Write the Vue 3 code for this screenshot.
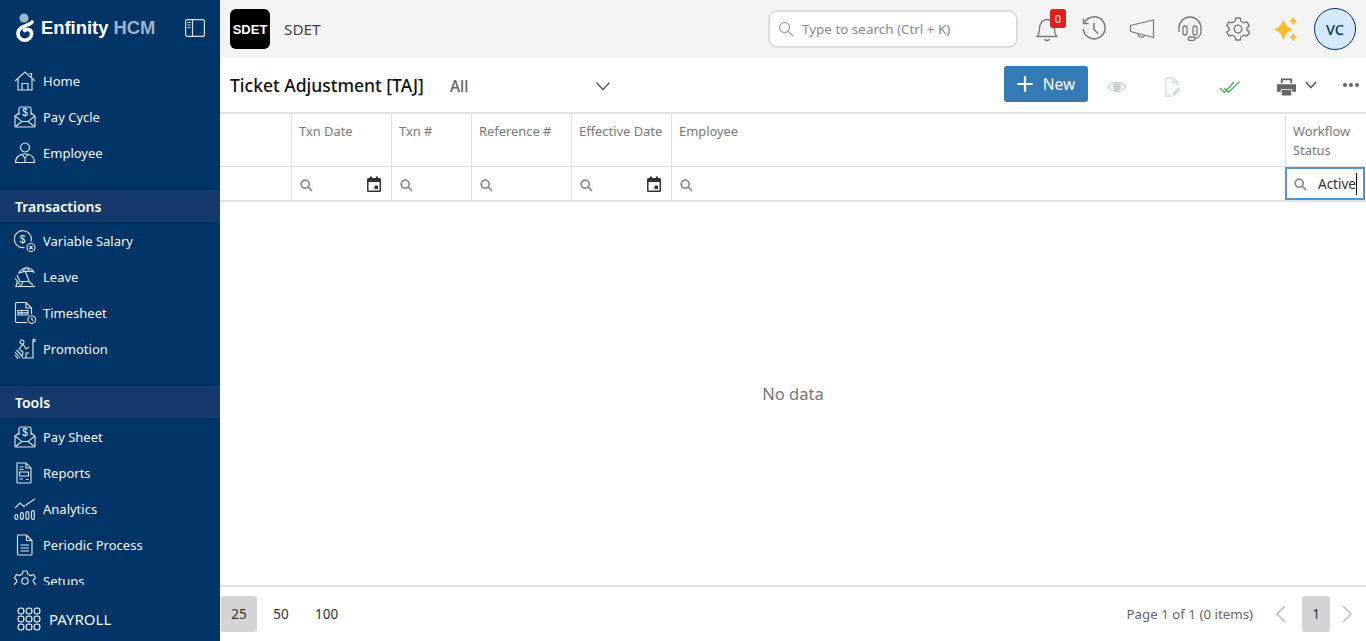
<template>
  <div class="app">
    <!-- sidebar -->
    <aside class="side">
      <div class="brand">
        <svg class="brand-mark" width="20" height="30" viewBox="0 0 20 30">
          <circle cx="9" cy="5" r="4.600" fill="#9db4cd" />
          <path d="M17 9C14.500 13 3 12.500 3 20.500a6.800 6.800 0 1 0 13.600 0C16.600 16.500 12 15.500 9.500 17.500" fill="none" stroke="#fff" stroke-width="3.600" stroke-linecap="round" />
        </svg>
        <span class="brand-name">Enfinity <b>HCM</b></span>
        <svg class="collapse" width="20" height="18" viewBox="0 0 20 18" fill="none" stroke="#d5e0ec" stroke-width="1.200">
          <rect x=".6" y=".6" width="18.800" height="16.800" rx="2" />
          <path d="M7.500 .6V17.400M2.500 3.500H5.500M2.500 6H5.500M2.500 8.500H5.500" />
        </svg>
      </div>
      <nav class="nav">
        <template v-for="group in groups" :key="group.title">
          <div v-if="group.title" class="nav-head">{{ group.title }}</div>
          <ul class="nav-list">
            <li v-for="item in group.items" :key="item.label" class="nav-item">
              <svg width="22" height="22" viewBox="0 0 22 22" fill="none" stroke="#dbe5f0" stroke-width="1.150">
                <path v-for="d in icons[item.icon]" :key="d" :d="d" />
                <text v-if="item.dollar" :x="item.dollar[0]" :y="item.dollar[1]" class="dollar">$</text>
              </svg>
              <span>{{ item.label }}</span>
            </li>
          </ul>
        </template>
      </nav>
      <div class="side-foot">
        <svg width="24" height="24" viewBox="0 0 24 24" fill="none" stroke="#dbe5f0" stroke-width="1.300">
          <template v-for="y in [4, 12, 20]" :key="y">
            <rect v-for="x in [4, 12, 20]" :key="x" :x="x - 2.800" :y="y - 2.800" width="5.600" height="5.600" rx="2" />
          </template>
        </svg>
        <span>PAYROLL</span>
      </div>
    </aside>

    <div class="main">
      <!-- top bar -->
      <header class="top">
        <div class="org-logo">SDET</div>
        <div class="org-name">SDET</div>
        <div class="search">
          <svg width="16" height="16" viewBox="0 0 16 16" fill="none" stroke="#999" stroke-width="1.100">
            <circle cx="6.500" cy="6.500" r="5" /><path d="M10.300 10.300L15 15" />
          </svg>
          <span>Type to search (Ctrl + K)</span>
        </div>
        <div class="top-icons">
          <div class="bell">
            <svg width="26" height="28" viewBox="0 0 26 28" fill="none" stroke="#777" stroke-width="1.300">
              <path d="M2 21.500C4.500 19 4.500 17 4.500 13.500C4.500 8.500 7.500 4.500 12 4.500C16.500 4.500 19.500 8.500 19.500 13.500C19.500 17 19.500 19 22 21.500Z" stroke-linejoin="round" />
              <path d="M9.500 24C10 26 14 26 14.500 24" />
            </svg>
            <span class="badge">0</span>
          </div>
          <svg width="26" height="26" viewBox="0 0 26 26" fill="none" stroke="#777" stroke-width="1.500">
            <path d="M3.500 6.500A11 11 0 1 1 2.200 13" /><path d="M2.500 2.500V7.500H7.500" /><path d="M13 7V13.500L17 17.500" />
          </svg>
          <svg width="26" height="22" viewBox="0 0 26 22" fill="none" stroke="#777" stroke-width="1.200">
            <path d="M1.500 7.500L24.500 2V19.500L1.500 13.500ZM9 15.500C9 20 15.500 20 15.500 17" stroke-linejoin="round" />
          </svg>
          <svg width="26" height="28" viewBox="0 0 26 28" fill="none" stroke="#777" stroke-width="1.300">
            <path d="M2 17V13A11 11 0 0 1 24 13V17C24 20 21.500 23 18 23.500" />
            <rect x="6" y="11" width="4" height="9" rx="2" /><rect x="16" y="11" width="4" height="9" rx="2" />
            <rect x="11" y="22" width="7" height="3.400" rx="1.700" />
          </svg>
          <svg width="26" height="26" viewBox="0 0 26 26" fill="none" stroke="#777" stroke-width="1.300">
            <circle cx="13" cy="13" r="3.800" />
            <path d="M10.800 2H15.200L16 5.200L18.800 6.800L22 5.900L24.200 9.700L21.800 12V14L24.200 16.300L22 20.100L18.800 19.200L16 20.800L15.200 24H10.800L10 20.800L7.200 19.200L4 20.100L1.800 16.300L4.200 14V12L1.800 9.700L4 5.900L7.200 6.800L10 5.200Z" stroke-linejoin="round" />
          </svg>
          <svg width="26" height="26" viewBox="0 0 26 26" fill="#fbbc2c">
            <path d="M10.500 3Q12.500 11.500 20 13.500Q12.500 15.500 10.500 24Q8.500 15.500 1 13.500Q8.500 11.500 10.500 3Z" />
            <path d="M20.300 .5Q21.200 4.100 25 5Q21.200 5.900 20.300 9.500Q19.400 5.900 15.600 5Q19.400 4.100 20.300 .5Z" />
            <path d="M20.300 16.500Q21.200 20.100 25 21Q21.200 21.900 20.300 25.500Q19.400 21.900 15.600 21Q19.400 20.100 20.300 16.500Z" />
          </svg>
          <div class="avatar">VC</div>
        </div>
      </header>

      <!-- toolbar -->
      <div class="bar">
        <h1 class="title">Ticket Adjustment [TAJ]</h1>
        <div class="filter">
          <span>All</span>
          <svg width="16" height="10" viewBox="0 0 16 10" fill="none" stroke="#555" stroke-width="1.200"><path d="M1.500 1.500L8 8.500L14.500 1.500" /></svg>
        </div>
        <button class="new-btn">
          <svg width="16" height="16" viewBox="0 0 16 16" stroke="#fff" stroke-width="2.200"><path d="M8 0V16M0 8H16" /></svg>
          New
        </button>
        <div class="bar-icons">
          <svg class="ic-eye" width="20" height="14" viewBox="0 0 20 14" fill="none" stroke="#ccd0d6" stroke-width="1.300">
            <path d="M1 7C5 1 15 1 19 7C15 13 5 13 1 7Z" /><circle cx="10" cy="7" r="3.400" fill="#ccd0d6" />
          </svg>
          <svg class="ic-note" width="18" height="20" viewBox="0 0 18 20" fill="none" stroke="#d6d9dd" stroke-width="1.300">
            <path d="M8 19H2V1H9.500L14 5.500V9M9.500 1V5.500H14" /><path d="M9 18L15.500 11.500" stroke-width="3.200" />
          </svg>
          <svg class="ic-check" width="22" height="14" viewBox="0 0 22 14" fill="none" stroke="#3fa648" stroke-width="1.200">
            <path d="M1 8L5.500 12.500L15 2M5.500 8L9.500 12.500L20.500 1.500" />
          </svg>
          <svg class="ic-print" width="19" height="18" viewBox="0 0 20 18" fill="#666">
            <path d="M4 0H16V5H14V2H6V5H4ZM0 6H20V14H16V11H4V14H0ZM5 12H15V18H5Z" />
          </svg>
          <svg class="ic-drop" width="12" height="8" viewBox="0 0 12 8" fill="none" stroke="#666" stroke-width="1.800"><path d="M1 1L6 6.500L11 1" /></svg>
          <span class="dots"><i></i><i></i><i></i></span>
        </div>
      </div>

      <!-- grid -->
      <div class="grid">
        <div class="grid-row head">
          <div v-for="col in columns" :key="col.key" class="cell">{{ col.title }}</div>
        </div>
        <div class="grid-row filters">
          <div v-for="col in columns" :key="col.key" class="cell" :class="{ focused: col.value }">
            <template v-if="col.key !== 'sel'">
              <svg class="lens" width="13" height="13" viewBox="0 0 13 13" fill="none" stroke="#8a8a8a" stroke-width="1.700">
                <circle cx="5.200" cy="5.200" r="4" /><path d="M8.200 8.200L12 12" />
              </svg>
              <span v-if="col.value" class="typed">{{ col.value }}</span>
              <svg v-if="col.date" class="cal" width="14" height="16" viewBox="0 0 14 16">
                <path d="M1.500 2H12.500A1.500 1.500 0 0 1 14 3.500V14.500A1.500 1.500 0 0 1 12.500 16H1.500A1.500 1.500 0 0 1 0 14.500V3.500A1.500 1.500 0 0 1 1.500 2ZM1.500 6V14.500H12.500V6Z" fill="#333" fill-rule="evenodd" />
                <path d="M3 .5H5V3H3ZM9 .5H11V3H9ZM7.500 9.500H11V13H7.500Z" fill="#333" />
              </svg>
            </template>
          </div>
        </div>
        <div class="empty">No data</div>
      </div>

      <!-- pager -->
      <footer class="pager">
        <button v-for="size in pageSizes" :key="size" class="page-btn" :class="{ on: size === 25 }">{{ size }}</button>
        <span class="info">Page 1 of 1 (0 items)</span>
        <svg class="arrow" width="11" height="18" viewBox="0 0 11 18" fill="none" stroke="#bbb" stroke-width="1.500"><path d="M10 1L2 9L10 17" /></svg>
        <button class="page-btn on num">1</button>
        <svg class="arrow" width="11" height="18" viewBox="0 0 11 18" fill="none" stroke="#bbb" stroke-width="1.500"><path d="M1 1L9 9L1 17" /></svg>
      </footer>
    </div>
  </div>
</template>

<script setup>
const icons = {
  home: ['M1 11L11 2L21 11', 'M4 9V20H18V9', 'M8 20V13.500H14V20', 'M15.500 3.500H17.500V6.500'],
  mail: ['M5 9V2.500A1.500 1.500 0 0 1 6.500 1H15.500A1.500 1.500 0 0 1 17 2.500V9', 'M5 7L1 10V20A1 1 0 0 0 2 21H20A1 1 0 0 0 21 20V10L17 7', 'M1 10L8 15.500H14L21 10', 'M1.500 20.500L8 15.500M20.500 20.500L14 15.500'],
  person: ['M11 1a4.500 4.500 0 1 0 .01 0Z', 'M1.500 20.500C1.500 15 5.500 12 11 12C16.500 12 20.500 15 20.500 20.500Z', 'M8 12.500L11 16L14 12.500M11 16V20.500'],
  salary: ['M17 11.500A8.500 8.500 0 1 0 10.500 17.500', 'M13 17.500a4 4 0 1 0 8 0a4 4 0 1 0 -8 0Z', 'M15.500 16L18.500 19M15.500 19L18.500 16'],
  leave: ['M5 7C8 1 16 0 20 6C15 4.500 10 5 5 7Z', 'M11 4.500L15 15', 'M3 9L6 15.500H15L19 19', 'M1 20.500H21', 'M3.500 15.500L2 20M9 15.500L7 20', 'M9 5L11.500 1.500M15 5L13 1', 'M1 12L6 19'],
  timesheet: ['M13 20.500H3A1.500 1.500 0 0 1 1.500 19V2A1.500 1.500 0 0 1 3 .5H12L17.500 6V12', 'M12 .5V6H17.500', 'M4 8.500H14V13H4Z', 'M4 10.800H14M7.500 8.500V13', 'M14 17.500a3.800 3.800 0 1 0 7.600 0a3.800 3.800 0 1 0 -7.600 0Z', 'M17.800 15.500V17.500L19.300 18.500'],
  promo: ['M19 6V20H8', 'M19 1V6M19 1L22 2.500L19 4', 'M8 2a2 2 0 1 0 .01 0Z', 'M9 6L5 11L9 14L8 19M9 6L12 11L15 9', 'M1 14L6 20M2.500 12L8 18M1 17L4 21', 'M12 20V15H15'],
  report: ['M3 1H12L17 6V20A1 1 0 0 1 16 21H4A1 1 0 0 1 3 20Z', 'M12 1V6H17', 'M5.500 5H9.500M5.500 7.500H9.500', 'M5.500 10H14.500V14H5.500Z', 'M5.500 17H9M12 17.500H14.500'],
  chart: ['M1 10L6 5L10 8.500L14 5.500L21 1', 'M1 20V18a1.400 1.400 0 0 1 2.800 0V20a1.400 1.400 0 0 1 -2.800 0Z', 'M6.500 20V16a1.400 1.400 0 0 1 2.800 0V20a1.400 1.400 0 0 1 -2.800 0Z', 'M12 20V15a1.400 1.400 0 0 1 2.800 0V20a1.400 1.400 0 0 1 -2.800 0Z', 'M17.500 20V14a1.400 1.400 0 0 1 2.800 0V20a1.400 1.400 0 0 1 -2.800 0Z'],
  doc: ['M3.500 1H12.500L18 6.500V20A1 1 0 0 1 17 21H4.500A1 1 0 0 1 3.500 20Z', 'M12.500 1V6.500H18', 'M6.500 11H15M6.500 14H15M6.500 17H15'],
  gear: ['M9 1H13L13.800 4L16.500 5.500L19.500 4.500L21.500 8L19.300 10V12L21.500 14L19.500 17.500L16.500 16.500L13.800 18L13 21H9L8.200 18L5.500 16.500L2.500 17.500L.5 14L2.700 12V10L.5 8L2.500 4.500L5.500 5.500L8.200 4Z', 'M7.800 11a3.200 3.200 0 1 0 6.400 0a3.200 3.200 0 1 0 -6.400 0Z'],
}

const groups = [
  {
    title: '',
    items: [
      { label: 'Home', icon: 'home' },
      { label: 'Pay Cycle', icon: 'mail', dollar: [11, 9.500] },
      { label: 'Employee', icon: 'person' },
    ],
  },
  {
    title: 'Transactions',
    items: [
      { label: 'Variable Salary', icon: 'salary', dollar: [8.500, 13] },
      { label: 'Leave', icon: 'leave' },
      { label: 'Timesheet', icon: 'timesheet' },
      { label: 'Promotion', icon: 'promo' },
    ],
  },
  {
    title: 'Tools',
    items: [
      { label: 'Pay Sheet', icon: 'mail', dollar: [11, 9.500] },
      { label: 'Reports', icon: 'report' },
      { label: 'Analytics', icon: 'chart' },
      { label: 'Periodic Process', icon: 'doc' },
      { label: 'Setups', icon: 'gear' },
    ],
  },
]

const columns = [
  { key: 'sel', title: '' },
  { key: 'date', title: 'Txn Date', date: true },
  { key: 'no', title: 'Txn #' },
  { key: 'ref', title: 'Reference #' },
  { key: 'eff', title: 'Effective Date', date: true },
  { key: 'emp', title: 'Employee' },
  { key: 'status', title: 'Workflow Status', value: 'Active' },
]

const pageSizes = [25, 50, 100]
</script>

<style>
html, body { margin: 0; height: 100%; overflow: hidden; background: #fff; }
</style>

<style scoped>
.app {
  display: flex; height: 641px; width: 1366px; overflow: hidden;
  font-family: "Noto Sans", "Open Sans", sans-serif; color: #333;
}

/* sidebar */
.side {
  width: 220px; flex-shrink: 0; background: #003366; color: #fff;
  display: flex; flex-direction: column; height: 100%;
}
.brand { height: 58px; flex-shrink: 0; display: flex; align-items: center; padding: 0 15px 0 15px; box-sizing: border-box; }
.brand-mark { flex-shrink: 0; margin-top: -2px; }
.brand-name { font: bold 18.400px "Liberation Sans", sans-serif; margin: -2px 0 0 6px; flex: 1; white-space: nowrap; }
.brand-name b { color: #9db4cd; }
.collapse { flex-shrink: 0; margin-top: -3px; }

.nav { flex: 1; min-height: 0; overflow: hidden; padding-top: 5px; }
.nav-list { list-style: none; margin: 0 0 19px; padding: 0; }
.nav-head {
  height: 32px; line-height: 34px; padding-left: 15px; margin-bottom: 1px;
  background: #15396a; font-size: 14px; font-weight: 600;
}
.nav-item { height: 36px; display: flex; align-items: center; gap: 7px; padding-left: 14px; font-size: 13px; color: #f2f6fb; }
.nav-item svg { flex-shrink: 0; }
.dollar { font: 10px "Liberation Sans", sans-serif; fill: #fff; stroke: none; text-anchor: middle; }

.side-foot { height: 56px; flex-shrink: 0; display: flex; align-items: center; gap: 8px; padding: 12px 0 0 17px; box-sizing: border-box; font-size: 15px; color: #f2f6fb; }

/* main column */
.main { flex: 1; min-width: 0; display: flex; flex-direction: column; }

.top { height: 58px; flex-shrink: 0; background: #f4f4f4; display: flex; align-items: center; padding: 0 10px; box-sizing: border-box; }
.org-logo {
  width: 40px; height: 40px; border-radius: 6px; background: #000; color: #fff;
  display: flex; align-items: center; justify-content: center;
  font: bold 13px "Liberation Sans", sans-serif;
}
.org-name { margin-left: 14px; font-size: 15.300px; color: #444; }
.search {
  margin-left: auto; width: 250px; height: 38px; box-sizing: border-box;
  background: #fff; border: 2px solid #dedede; border-radius: 9px;
  display: flex; align-items: center; gap: 8px; padding-left: 8px;
  font-size: 13.450px; color: #8a8a8a;
}
.top-icons { display: flex; align-items: center; margin-left: 17px; gap: 22px; }
.top-icons > svg { flex-shrink: 0; }
.bell { position: relative; width: 26px; height: 28px; margin-right: -2px; }
.badge {
  position: absolute; left: 15px; top: -6px; width: 16px; height: 19px; border-radius: 3px;
  background: #e02020; color: #fff; font-size: 11px; line-height: 19px; text-align: center;
}
.avatar {
  width: 42px; height: 42px; box-sizing: border-box; margin-left: -7px;
  border-radius: 50%; border: 1px solid #003366; background: #d6e9fc; color: #003366;
  display: flex; align-items: center; justify-content: center; font-size: 14.500px; font-weight: 500;
}

.bar { height: 54px; flex-shrink: 0; display: flex; align-items: center; padding: 0 0 0 10px; box-sizing: border-box; }
.title { margin: 0; font-size: 17.500px; font-weight: 500; color: #111; white-space: nowrap; }
.filter { width: 161px; margin: 2px 0 0 26px; display: flex; align-items: center; justify-content: space-between; font-size: 15.500px; font-weight: 500; color: #666; }
.new-btn {
  margin: -2px 0 0 auto; width: 84px; height: 36px; border: 0; border-radius: 3px; background: #337ab7; color: #fff;
  display: flex; align-items: center; justify-content: center; gap: 10px; font: 15.500px "Noto Sans", sans-serif;
}
.bar-icons { width: 278px; display: flex; align-items: center; padding-top: 3px; box-sizing: border-box; }
.ic-eye { margin-left: 19px; }
.ic-note { margin-left: 37px; }
.ic-check { margin-left: 37px; }
.ic-print { margin-left: 36px; }
.ic-drop { margin: -4px 0 0 9px; }
.dots { margin: -4px 0 0 26px; display: flex; gap: 2px; }
.dots i { width: 4px; height: 4px; border-radius: 50%; background: #666; }

/* grid */
.grid { flex: 1; min-height: 0; display: flex; flex-direction: column; border-top: 2px solid #e2e2e2; border-bottom: 2px solid #e2e2e2; }
.grid-row { display: grid; grid-template-columns: 71px 100px 80px 100px 100px 614px 81px; flex-shrink: 0; }
.cell { border-left: 1px solid #e0e0e0; box-sizing: border-box; min-width: 0; }
.cell:first-child { border-left: 0; }
.head { height: 52px; border-bottom: 1px solid #e0e0e0; box-sizing: content-box; }
.head .cell { padding: 8px 7px 0; font-size: 12.900px; line-height: 19px; color: #7a7a7a; }
.filters { height: 33px; border-bottom: 2px solid #e2e2e2; box-sizing: content-box; }
.filters .cell { display: flex; align-items: center; padding: 1px 10px 0 8px; }
.lens { flex-shrink: 0; margin-top: 2px; }
.cal { margin-left: auto; }
.focused { border: 2px solid #5b93c7 !important; padding: 0 0 0 7px !important; margin-right: 1px; }
.typed { margin-left: 11px; font-size: 13.500px; color: #333; border-right: 1px solid #111; line-height: 22px; white-space: nowrap; }
.empty { flex: 1; display: flex; align-items: center; justify-content: center; font-size: 16.500px; color: #777; }

.pager { height: 54px; flex-shrink: 0; display: flex; align-items: center; padding: 0 13px 0 1px; box-sizing: border-box; font-size: 13.300px; }
.page-btn { height: 36px; min-width: 36px; padding: 0 10px; margin-right: 6px; border: 0; border-radius: 3px; background: none; color: #333; font: 13.500px "Noto Sans", sans-serif; box-sizing: border-box; }
.page-btn.on { background: #d4d4d4; }
.page-btn.num { min-width: 28px; width: 28px; padding: 0; margin: 0 12px 0 16px; }
.info { margin-left: auto; color: #666; }
.arrow { margin-left: 22px; flex-shrink: 0; }
.num + .arrow { margin-left: 0; }
</style>
